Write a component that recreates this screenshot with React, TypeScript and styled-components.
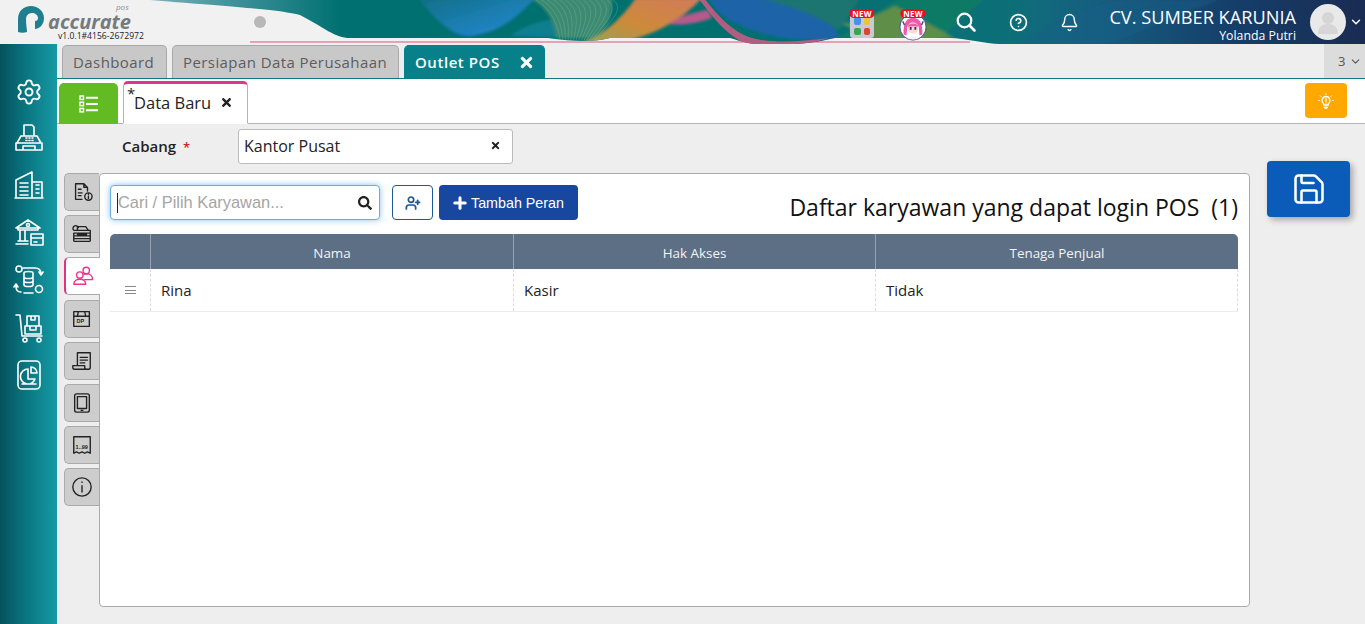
import React from "react";
import styled, { createGlobalStyle } from "styled-components";
import { Bell, ChevronDown, CircleHelp, Plus, Save, Settings, UserPlus } from "lucide-react";
import { FaSearch, FaTimes } from "react-icons/fa";

const GlobalStyle = createGlobalStyle`
  html, body {
    margin: 0;
    padding: 0;
    height: 100%;
    overflow: hidden;
    background: #eeeeee;
    font-family: "Open Sans", "Liberation Sans", sans-serif;
  }
  * { box-sizing: border-box; }
`;

const Page = styled.div`
  width: 1365px;
  height: 624px;
  display: flex;
  flex-direction: column;
`;

/* ---------- header ---------- */
const Header = styled.header`
  position: relative;
  height: 44px;
  flex: none;
  display: flex;
  align-items: center;
  background: #f1f1f1;
  overflow: hidden;
`;

const HeaderArt = styled.svg`
  position: absolute;
  inset: 0;
  width: 100%;
  height: 100%;
`;

const LogoBox = styled.div`
  position: relative;
  width: 160px;
  height: 44px;
  flex: none;
`;

const LogoMark = styled.svg`
  position: absolute;
  left: 17px;
  top: 5px;
  width: 28px;
  height: 29px;
`;

const LogoWord = styled.span`
  position: absolute;
  left: 48px;
  top: 12px;
  font-size: 20px;
  line-height: 20px;
  font-weight: 700;
  font-style: italic;
  color: #737b80;
`;

const LogoPos = styled.span`
  position: absolute;
  left: 116px;
  top: 2px;
  font-size: 8px;
  line-height: 10px;
  font-style: italic;
  color: #8a8f92;
`;

const Version = styled.span`
  position: absolute;
  left: 58px;
  top: 32px;
  font-size: 8.6px;
  line-height: 9px;
  color: #222;
  white-space: nowrap;
`;

const Dot = styled.span`
  position: relative;
  width: 12px;
  height: 12px;
  margin-left: 94px;
  border-radius: 50%;
  background: #b8b8b8;
`;

const HeaderRight = styled.div`
  position: relative;
  margin-left: auto;
  display: flex;
  align-items: center;
  height: 44px;
  color: #fff;
`;

const NewItem = styled.div<{ $gap: number }>`
  position: relative;
  width: 28px;
  height: 26px;
  margin-top: 6px;
  margin-right: ${(p) => p.$gap}px;
  display: flex;
  justify-content: center;
`;

const NewBadge = styled.span`
  position: absolute;
  top: -3px;
  left: 50%;
  transform: translateX(-50%);
  z-index: 1;
  padding: 0 3px;
  height: 9px;
  border-radius: 5px;
  background: #e8101c;
  color: #fff;
  font-size: 8px;
  line-height: 9px;
  font-weight: 700;
  letter-spacing: 0.2px;
`;

const AppsTile = styled.div`
  margin-top: 2px;
  width: 24px;
  height: 24px;
  padding: 3px 4px;
  border-radius: 3px;
  background: #c4ccd2;
  display: grid;
  grid-template-columns: 1fr 1fr;
  gap: 3px;
`;

const AppsCell = styled.span<{ $color: string }>`
  border-radius: 2px;
  background: ${(p) => p.$color};
`;

const HeaderIcon = styled.span<{ $width: number }>`
  width: ${(p) => p.$width}px;
  display: flex;
  justify-content: center;
  align-items: center;
`;

const Company = styled.div`
  width: 214px;
  text-align: right;
`;

const CompanyName = styled.div`
  font-size: 18.2px;
  line-height: 22px;
  margin-top: 4px;
  white-space: nowrap;
`;

const UserName = styled.div`
  font-size: 12.3px;
  line-height: 15px;
`;

const Avatar = styled.div`
  width: 36px;
  height: 36px;
  margin-left: 14px;
  border-radius: 50%;
  background: #e9e9e9;
  overflow: hidden;
  display: flex;
  justify-content: center;
`;

const CaretBox = styled.span`
  width: 19px;
  display: flex;
  justify-content: center;
`;

/* ---------- frame ---------- */
const Body = styled.div`
  flex: 1;
  display: flex;
  min-height: 0;
`;

const Sidebar = styled.nav`
  width: 57px;
  flex: none;
  padding-top: 32px;
  display: flex;
  flex-direction: column;
  align-items: center;
  gap: 15.5px;
  color: #fff;
  background: linear-gradient(90deg, #04525c 0%, #0a7580 45%, #169aa5 100%);
`;

const SideIcon = styled.svg`
  width: 32px;
  height: 32px;
  fill: none;
  stroke: #fff;
  stroke-width: 1.6;
  stroke-linecap: round;
  stroke-linejoin: round;
`;

const GearIcon = styled(Settings)`
  margin: 2px 0 0;
`;

const Main = styled.main`
  flex: 1;
  min-width: 0;
  display: flex;
  flex-direction: column;
`;

const TabBar = styled.div`
  height: 35px;
  flex: none;
  display: flex;
  align-items: flex-end;
  padding-left: 5px;
  gap: 5px;
  border-bottom: 1px solid #0d7a80;
`;

const Tab = styled.div<{ $active?: boolean; $width: number }>`
  width: ${(p) => p.$width}px;
  height: 33px;
  padding-left: 10px;
  display: flex;
  align-items: center;
  border: 1px solid ${(p) => (p.$active ? "#07808a" : "#a9a9a9")};
  border-bottom: 0;
  border-radius: 5px 5px 0 0;
  background: ${(p) => (p.$active ? "#07808a" : "#c8c8c8")};
  color: ${(p) => (p.$active ? "#fff" : "#5d5d5d")};
  font-size: 15px;
  font-weight: ${(p) => (p.$active ? 600 : 400)};
  letter-spacing: ${(p) => (p.$active ? 0.55 : 0.42)}px;
  white-space: nowrap;
`;

const TabClose = styled.span`
  margin-left: auto;
  margin-right: 9px;
  display: flex;
  font-size: 17px;
`;

const TabCount = styled.div`
  margin-left: auto;
  width: 41px;
  height: 34px;
  padding: 0 3px 0 14px;
  display: flex;
  align-items: center;
  justify-content: space-between;
  background: #dcdcdc;
  color: #555;
  font-size: 13px;
`;

const SubBar = styled.div`
  height: 45px;
  flex: none;
  display: flex;
  align-items: flex-end;
  padding: 0 18px 0 2px;
  background: #fff;
  border-bottom: 1px solid #b4b4b4;
`;

const ListButton = styled.div`
  width: 59px;
  height: 41px;
  margin-bottom: -1px;
  border-radius: 5px 5px 0 0;
  background: #63bb24;
  color: #fff;
  display: flex;
  align-items: center;
  justify-content: center;
`;

const DocTab = styled.div`
  position: relative;
  width: 125px;
  height: 43px;
  margin-left: 5px;
  margin-bottom: -1px;
  padding: 0 0 2px 10px;
  display: flex;
  align-items: center;
  background: #fff;
  border: 1px solid #b4b4b4;
  border-top: 3px solid #e0338f;
  border-bottom-color: #fff;
  border-radius: 5px 5px 0 0;
  font-size: 16.5px;
  color: #222;
`;

const DocStar = styled.span`
  position: absolute;
  left: 3px;
  top: 2px;
  font-size: 15px;
  line-height: 15px;
`;

const DocClose = styled.span`
  display: flex;
  margin-left: 9px;
  font-size: 13px;
`;

const TipButton = styled.div`
  margin-left: auto;
  align-self: flex-start;
  margin-top: 4px;
  width: 42px;
  height: 35px;
  border-radius: 4px;
  background: #ffa800;
  display: flex;
  align-items: center;
  justify-content: center;
  color: #fff;
`;

const Content = styled.div`
  flex: 1;
  min-height: 0;
  display: flex;
  padding-left: 7px;
`;

const FormColumn = styled.div`
  width: 1186px;
  flex: none;
  display: flex;
  flex-direction: column;
`;

const BranchRow = styled.div`
  height: 49px;
  display: flex;
  align-items: center;
  padding: 0 0 4px 58px;
`;

const BranchLabel = styled.label`
  width: 116px;
  margin-top: -2px;
  font-size: 15px;
  font-weight: 600;
  color: #222;

  i {
    color: #d61f1f;
    margin-left: 3px;
    font-size: 13px;
    font-style: normal;
  }
`;

const BranchSelect = styled.div`
  width: 275px;
  height: 35px;
  padding: 0 11px 2px 5px;
  display: flex;
  align-items: center;
  justify-content: space-between;
  background: #fff;
  border: 1px solid #bbbbbb;
  border-radius: 3px;
  font-size: 16px;
  color: #222;

  svg {
    font-size: 11px;
  }
`;

const PanelRow = styled.div`
  height: 434px;
  display: flex;
`;

const SideTabs = styled.div`
  width: 35px;
  flex: none;
  display: flex;
  flex-direction: column;
  gap: 4.2px;
`;

const SideTab = styled.div<{ $active?: boolean }>`
  position: relative;
  width: ${(p) => (p.$active ? 36 : 35)}px;
  height: 38px;
  z-index: ${(p) => (p.$active ? 1 : 0)};
  display: flex;
  align-items: center;
  justify-content: center;
  border: 1px solid #aaaaaa;
  border-right: 0;
  border-left: ${(p) => (p.$active ? "2px solid #e0337f" : "1px solid #aaaaaa")};
  border-radius: 5px 0 0 5px;
  background: ${(p) => (p.$active ? "#fff" : "#cdcdcd")};
`;

const TabGlyph = styled.svg<{ $active?: boolean }>`
  width: 22px;
  height: 22px;
  fill: none;
  stroke: ${(p) => (p.$active ? "#e8368f" : "#222")};
  stroke-width: 1.5;
  stroke-linecap: round;
  stroke-linejoin: round;

  text {
    fill: #222;
    stroke: none;
    font-family: "Liberation Sans", sans-serif;
    font-size: 6px;
    font-weight: 700;
  }
`;

const Panel = styled.section`
  width: 1151px;
  height: 434px;
  padding: 11px 11px 0 10px;
  background: #fff;
  border: 1px solid #aaaaaa;
  border-radius: 4px;
`;

const Toolbar = styled.div`
  height: 35px;
  display: flex;
  align-items: center;
  margin-bottom: 14px;
`;

const SearchBox = styled.div`
  width: 270px;
  height: 35px;
  padding: 0 7px 0 6px;
  display: flex;
  align-items: center;
  background: #fff;
  border: 1px solid #66afe0;
  border-radius: 4px;
  box-shadow: 0 0 6px rgba(60, 150, 230, 0.6);

  svg {
    font-size: 14px;
    color: #222;
  }
`;

const Caret = styled.span`
  width: 1px;
  height: 20px;
  background: #222;
`;

const Placeholder = styled.span`
  flex: 1;
  font-family: "Liberation Sans", Arial, sans-serif;
  font-size: 16.4px;
  color: #a5a5a5;
`;

const OutlineButton = styled.div`
  width: 41px;
  height: 35px;
  margin-left: 12px;
  display: flex;
  align-items: center;
  justify-content: center;
  border: 1px solid #1d5a94;
  border-radius: 4px;
  color: #1d5a94;
`;

const AddButton = styled.div`
  width: 139px;
  height: 35px;
  margin-left: 6px;
  padding-left: 12px;
  display: flex;
  align-items: center;
  gap: 2px;
  border-radius: 4px;
  background: #17479e;
  color: #fff;
  font-family: "Liberation Sans", Arial, sans-serif;
  font-size: 14.3px;
`;

const Title = styled.h2`
  margin: 9px 0 0 auto;
  font-size: 23px;
  line-height: 30px;
  font-weight: 400;
  color: #111;
  white-space: pre;
`;

const Grid = styled.div`
  width: 1128px;
`;

const GridRow = styled.div<{ $head?: boolean }>`
  display: grid;
  grid-template-columns: 41px 363px 362px 362px;
  height: ${(p) => (p.$head ? 35 : 43)}px;
  background: ${(p) => (p.$head ? "#5d6f85" : "#fff")};
  border-radius: ${(p) => (p.$head ? "5px 5px 0 0" : "0")};
  border-bottom: ${(p) => (p.$head ? "0" : "1px solid #ececec")};
`;

const HeadCell = styled.div`
  display: flex;
  align-items: center;
  justify-content: center;
  padding-top: 2px;
  color: #f2f4f6;
  font-size: 13.4px;
  border-right: 1px solid #97a3b2;

  &:last-child {
    border-right: 0;
  }
`;

const BodyCell = styled.div`
  display: flex;
  align-items: center;
  padding-left: 10px;
  font-size: 15px;
  color: #222;
  border-right: 1px dashed #dddddd;
`;

const HandleCell = styled(BodyCell)`
  padding-left: 15px;
`;

const Handle = styled.span`
  width: 11px;
  height: 8px;
  border-top: 1px solid #888;
  border-bottom: 1px solid #888;
  position: relative;

  &::after {
    content: "";
    position: absolute;
    left: 0;
    right: 0;
    top: 2.5px;
    height: 1px;
    background: #888;
  }
`;

const SaveColumn = styled.div`
  padding: 37px 0 0 17px;
`;

const SaveButton = styled.div`
  width: 83px;
  height: 56px;
  display: flex;
  align-items: center;
  justify-content: center;
  border-radius: 4px;
  background: #0a5cb8;
  color: #fff;
  box-shadow: 3px 3px 6px rgba(0, 0, 0, 0.3);
`;

const ListIcon = () => (
  <svg width="20" height="18" viewBox="0 0 20 18" fill="none" stroke="#fff">
    <rect x="1" y="1" width="3.5" height="3.5" strokeWidth="1.4" />
    <rect x="1" y="7.2" width="3.5" height="3.5" strokeWidth="1.4" />
    <rect x="1" y="13.4" width="3.5" height="3.5" strokeWidth="1.4" />
    <path d="M7 2.700h12M7 9h12M7 15.200h12" strokeWidth="2" />
  </svg>
);

const BulbIcon = () => (
  <svg width="18" height="18" viewBox="0 0 18 18" fill="none" stroke="#fff" strokeLinecap="round">
    <path d="M9 4.500a4 4 0 0 0-2.300 7.200v1.300h4.600v-1.300A4 4 0 0 0 9 4.500z" strokeWidth="1.300" />
    <path d="M7.200 15h3.600L9.800 16.500H8.200z" fill="#fff" strokeWidth="0.8" />
    <path d="M9 6.500v3M9 10.800v.2" strokeWidth="1.200" />
    <path d="M9 1.500v1M3.200 3.700l.8.8M14.800 3.700l-.8.8M1.500 8.500h1M15.500 8.500h1" strokeWidth="0.9" />
  </svg>
);

const Sidebars = () => (
  <Sidebar>
    <GearIcon size={28} strokeWidth={1.6} />
    <SideIcon viewBox="0 0 32 32">
      <path d="M11 14V3h8l2 2v9M4 21l4-7h16l4 7M3 21h26v7H3zM10 24h12v4H10zM13 16h1M16 16h1M19 16h1M13 18.500h1M16 18.500h1M19 18.500h1" />
    </SideIcon>
    <SideIcon viewBox="0 0 32 32">
      <path d="M3 29V11L19 3v26M19 13h10v16M2 29h28M7 14h8M7 18h8M7 22h8M7 26h8M23 16h3M23 20h3M23 24h3" />
    </SideIcon>
    <SideIcon viewBox="0 0 32 32">
      <path d="M3 11 15 3l12 8zM5 11v2h20v-2M7 14v10M12 14v10M3 27h12M5 24h10M18 17h12v11H18zM18 21h12M21 25h3" />
      <circle cx="15" cy="8" r="1.500" />
    </SideIcon>
    <SideIcon viewBox="0 0 32 32">
      <path d="M11 9c0-2 9-2 9 0v12c0 2-9 2-9 0zM11 13c0 2 9 2 9 0M11 17c0 2 9 2 9 0M10 4h12c4 0 6 2 6 6M26 8l2 3 2-3M8 28c-4 0-5-2-5-7M1 23l2-3 2 3M20 29h-9" />
      <circle cx="6" cy="5" r="3" />
      <circle cx="26" cy="25" r="3.500" />
    </SideIcon>
    <SideIcon viewBox="0 0 32 32">
      <path d="M3 3h4l2 21h20M14 4h12v10H14zM18 4v4h4V4M12 14h16v8H12zM17 14v4h6v-4" />
      <circle cx="12" cy="28" r="2" />
      <circle cx="26" cy="28" r="2" />
    </SideIcon>
    <SideIcon viewBox="0 0 32 32">
      <rect x="5" y="2" width="22" height="28" rx="4" />
      <path d="M15 10a7.500 7.500 0 1 0 7 10h-7zM18 8a6 6 0 0 1 6 6h-6zM9 25h14" />
    </SideIcon>
  </Sidebar>
);

const sideGlyphs = [
  <path key="a" d="M5 20V3h9l4 4v4M14 3v4h4M5 20h7M8 9h3M8 13h4M8 16h3M19 16.500v2.500M19 14.500v.3M15 17a4 4 0 1 0 8 0 4 4 0 0 0-8 0z" />,
  <path key="b" d="M7 8V4h9l3 4M3 11h18v3H3zM3 14v5c0 1 1 1 1 1h16c1 0 1-1 1-1v-5M3 17h18M7 12.500h10M3 8h18v3M8 5a3 3 0 1 0-5 3" />,
  <g key="c">
    <circle cx="15.500" cy="6" r="3.500" />
    <circle cx="8.500" cy="11" r="3.500" />
    <path d="M2 21c0-3.500 3-5.500 6.500-5.500S15 17.500 15 21zM13 10.500c1-.5 2-1 3-1 3.500 0 6.500 2.500 6.500 6.500h-9" />
  </g>,
  <g key="d">
    <path d="M3 4h17v16H3zM3 9h17M8 4l-1 5M15 4l1 5" />
    <text x="6" y="16.500">DP</text>
  </g>,
  <path key="e" d="M7 17V3h14v16a2 2 0 0 1-2 2H4a2 2 0 0 1-2-2v-2h13v2a2 2 0 0 0 2 2M10 8h8M10 11h8M10 14h5" />,
  <path key="f" d="M6 2h12a2 2 0 0 1 2 2v16a2 2 0 0 1-2 2H6a2 2 0 0 1-2-2V4a2 2 0 0 1 2-2zM7 5h10v13H7zM11 20h2" />,
  <g key="g">
    <path d="M3 3h18v18l-3-1.500-3 1.500-3-1.500-3 1.500-3-1.500L3 21z" />
    <text x="5" y="16">1..99</text>
  </g>,
  <path key="h" d="M12 2a10 10 0 1 0 0 20 10 10 0 0 0 0-20zM12 10.500v7M12 6.500v.5" />,
];

const meshLines = Array.from({ length: 14 }, (_, i) => i * 6);

export default function App() {
  return (
    <Page>
      <GlobalStyle />
      <Header>
        <HeaderArt viewBox="0 0 1365 44" preserveAspectRatio="none">
          <defs>
            <linearGradient id="band" x1="0" x2="1" y1="0" y2="0">
              <stop offset="0" stopColor="#eef0f0" />
              <stop offset="0.07" stopColor="#a9c6c8" />
              <stop offset="0.17" stopColor="#3f929b" />
              <stop offset="0.25" stopColor="#007070" />
              <stop offset="0.55" stopColor="#00706f" />
              <stop offset="0.74" stopColor="#0d6f78" />
              <stop offset="0.8" stopColor="#165f80" />
              <stop offset="0.9" stopColor="#153f6b" />
              <stop offset="1" stopColor="#1a2b52" />
            </linearGradient>
            <linearGradient id="orange" x1="0" x2="1" y1="1" y2="0">
              <stop offset="0" stopColor="#8aa858" />
              <stop offset="0.45" stopColor="#cc8a3a" />
              <stop offset="1" stopColor="#d27a5c" />
            </linearGradient>
            <linearGradient id="blue" x1="0" x2="1" y1="0" y2="1">
              <stop offset="0" stopColor="#0f6f86" />
              <stop offset="0.8" stopColor="#2285c8" />
              <stop offset="1" stopColor="#1878a8" />
            </linearGradient>
            <filter id="soft" x="-5%" y="-20%" width="110%" height="140%">
              <feGaussianBlur stdDeviation="1.600" />
            </filter>
            <clipPath id="strip">
              <path d="M0 0H1365V44H1000C985 44 965 38 950 38H835C825 40 810 45 770 45C750 45 740 41 730 38H610C595 42 575 42 548 38H350C335 38 325 28 300 15C280 10 250 8 150 0Z" />
            </clipPath>
          </defs>
          <rect x="250" y="41" width="720" height="2" fill="#e8a0b6" />
          <g clipPath="url(#strip)">
            <rect width="1365" height="44" fill="url(#band)" />
            <g filter="url(#soft)">
              <path d="M418 -2H536C520 12 505 32 470 36C450 36 435 18 418 -2Z" fill="url(#blue)" />
              <path d="M510 36C525 26 535 22 550 20L590 38Z" fill="#0f7f8e" />
              <path d="M530 -2H612C612 14 610 30 590 38H556C555 20 545 6 530 -2Z" fill="#3d8a72" />
              <path d="M572 44C600 40 620 20 636 -2H702C690 10 670 32 615 44Z" fill="url(#orange)" />
              <path d="M668 24C680 16 695 12 708 10L712 18C700 22 685 26 668 24Z" fill="#b65a8a" />
              <path d="M708 -2H765C810 10 840 26 838 38C800 44 750 36 720 14Z" fill="#1f63a8" />
              <path d="M760 -2H860C850 14 845 24 838 30C815 14 790 6 760 -2Z" fill="#1f7570" />
              <path d="M835 38C860 30 880 4 905 -2H985C960 20 945 38 925 42Z" fill="#107a66" />
              <path d="M842 24C862 20 880 14 895 6L955 38C930 40 905 42 880 40C865 38 855 30 842 24Z" fill="#8a9a3c" opacity="0.65" />
              <path d="M1020 44C1060 20 1100 0 1130 0H1220C1160 20 1120 44 1100 44Z" fill="#1b5f88" opacity="0.45" />
            </g>
            <path d="M698 -2H704C720 18 734 34 756 39C775 43 800 42 828 38C800 48 765 48 746 44C725 34 712 16 698 -2Z" fill="#dc5a84" opacity="0.8" />
            {meshLines.map((d) => (
              <path
                key={d}
                d={`M${532 + d} -2C${552 + d} 8 ${558 + d * 0.6} 26 ${560 + d * 0.45} 40`}
                fill="none"
                stroke="#8fc4a4"
                strokeWidth="0.5"
                opacity="0.6"
              />
            ))}
          </g>
        </HeaderArt>
        <LogoBox>
          <LogoMark viewBox="0 0 28 29">
            <path d="M1 27V14C1 6 7 1 14 1s13 5 13 12c0 7-5 11-9 11v-8c2 0 3-1 3-3 0-3-3-5-6-5-4 0-6 3-6 6 0 6 1 10 1 13-3 1-6 1-9 0z" fill="#1f7f8e" />
          </LogoMark>
          <LogoWord>accurate</LogoWord>
          <LogoPos>pos</LogoPos>
          <Version>v1.0.1#4156-2672972</Version>
        </LogoBox>
        <Dot />
        <HeaderRight>
          <NewItem $gap={23}>
            <NewBadge>NEW</NewBadge>
            <AppsTile>
              <AppsCell $color="#4a8fe8" />
              <AppsCell $color="#f2c230" />
              <AppsCell $color="#3fa24f" />
              <AppsCell $color="#d9452f" />
            </AppsTile>
          </NewItem>
          <NewItem $gap={25}>
            <NewBadge>NEW</NewBadge>
            <svg width="30" height="30" viewBox="0 0 30 30">
              <circle cx="15" cy="15" r="14" fill="#fff" stroke="#3a4c8a" strokeWidth="1" />
              <path d="M5 23C4 10 9 5 15 5s11 5 10 18l-3 1-1-10H9l-1 10z" fill="#ee5aa8" />
              <circle cx="15" cy="16" r="6" fill="#fbd9d0" />
              <path d="M9 15c2-5 10-5 12 0-4-1-8-1-12 0z" fill="#ee5aa8" />
              <rect x="11.500" y="15" width="2" height="3" fill="#4b2a6a" />
              <rect x="16.500" y="15" width="2" height="3" fill="#4b2a6a" />
              <path d="M10 28c1-5 9-5 10 0z" fill="#f6f1f5" />
              <path d="M4 9l2 4M26 9l-2 4" stroke="#3a4c8a" strokeWidth="1.500" />
            </svg>
          </NewItem>
          <HeaderIcon $width={27}>
            <svg width="22" height="22" viewBox="0 0 22 22" fill="none" stroke="#fff" strokeLinecap="round">
              <circle cx="9.500" cy="9.500" r="6.800" strokeWidth="2.200" />
              <path d="M14.500 14.500l5 5" strokeWidth="2.600" />
            </svg>
          </HeaderIcon>
          <HeaderIcon $width={78}>
            <CircleHelp size={19} strokeWidth={2.1} />
          </HeaderIcon>
          <HeaderIcon $width={25}>
            <Bell size={19} strokeWidth={1.8} />
          </HeaderIcon>
          <Company>
            <CompanyName>CV. SUMBER KARUNIA</CompanyName>
            <UserName>Yolanda Putri</UserName>
          </Company>
          <Avatar>
            <svg width="36" height="36" viewBox="0 0 36 36" fill="#d6d6d6">
              <circle cx="18" cy="14" r="6" />
              <path d="M8 30c0-8 5-10 10-10s10 2 10 10z" />
            </svg>
          </Avatar>
          <CaretBox>
            <ChevronDown size={14} strokeWidth={2.4} />
          </CaretBox>
        </HeaderRight>
      </Header>
      <Body>
        <Sidebars />
        <Main>
          <TabBar>
            <Tab $width={105}>Dashboard</Tab>
            <Tab $width={227}>Persiapan Data Perusahaan</Tab>
            <Tab $width={141} $active>
              Outlet POS
              <TabClose>
                <FaTimes />
              </TabClose>
            </Tab>
            <TabCount>
              3 <ChevronDown size={13} />
            </TabCount>
          </TabBar>
          <SubBar>
            <ListButton>
              <ListIcon />
            </ListButton>
            <DocTab>
              <DocStar>*</DocStar>
              Data Baru
              <DocClose>
                <FaTimes />
              </DocClose>
            </DocTab>
            <TipButton>
              <BulbIcon />
            </TipButton>
          </SubBar>
          <Content>
            <FormColumn>
              <BranchRow>
                <BranchLabel>
                  Cabang <i>*</i>
                </BranchLabel>
                <BranchSelect>
                  Kantor Pusat
                  <FaTimes />
                </BranchSelect>
              </BranchRow>
              <PanelRow>
                <SideTabs>
                  {sideGlyphs.map((g, i) => (
                    <SideTab key={i} $active={i === 2}>
                      <TabGlyph viewBox="0 0 24 24" $active={i === 2}>
                        {g}
                      </TabGlyph>
                    </SideTab>
                  ))}
                </SideTabs>
                <Panel>
                  <Toolbar>
                    <SearchBox>
                      <Caret />
                      <Placeholder>Cari / Pilih Karyawan...</Placeholder>
                      <FaSearch />
                    </SearchBox>
                    <OutlineButton>
                      <UserPlus size={16} strokeWidth={2.6} />
                    </OutlineButton>
                    <AddButton>
                      <Plus size={18} strokeWidth={4} />
                      Tambah Peran
                    </AddButton>
                    <Title>{"Daftar karyawan yang dapat login POS  (1)"}</Title>
                  </Toolbar>
                  <Grid>
                    <GridRow $head>
                      <HeadCell />
                      <HeadCell>Nama</HeadCell>
                      <HeadCell>Hak Akses</HeadCell>
                      <HeadCell>Tenaga Penjual</HeadCell>
                    </GridRow>
                    <GridRow>
                      <HandleCell>
                        <Handle />
                      </HandleCell>
                      <BodyCell>Rina</BodyCell>
                      <BodyCell>Kasir</BodyCell>
                      <BodyCell>Tidak</BodyCell>
                    </GridRow>
                  </Grid>
                </Panel>
              </PanelRow>
            </FormColumn>
            <SaveColumn>
              <SaveButton>
                <Save size={36} strokeWidth={1.7} />
              </SaveButton>
            </SaveColumn>
          </Content>
        </Main>
      </Body>
    </Page>
  );
}
